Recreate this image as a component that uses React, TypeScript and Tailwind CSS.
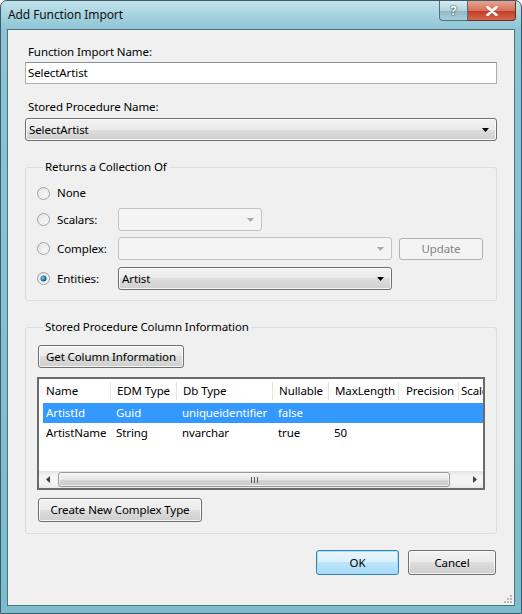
import React from "react";

const FONT = "font-['Noto_Sans','Open_Sans',sans-serif]";

const BTN =
  "border border-[#707070] rounded-[3px] bg-[linear-gradient(to_bottom,#f2f2f2_0%,#ebebeb_50%,#dddddd_50%,#cfcfcf_100%)] shadow-[inset_0_0_0_1px_rgba(255,255,255,0.8)] text-black flex items-center justify-center";

function Arrow({ disabled }: { disabled?: boolean }) {
  return (
    <svg width="7" height="4" viewBox="0 0 7 4" className="shrink-0">
      <path d="M0 0h7L3.5 4z" fill={disabled ? "#a8a8a8" : "#000"} />
    </svg>
  );
}

function Combo({
  value,
  width,
  disabled,
}: {
  value?: string;
  width: string;
  disabled?: boolean;
}) {
  return (
    <div
      className={`${width} h-[23px] flex items-center pl-[3px] pr-[7px] rounded-[3px] border ${
        disabled
          ? "border-[#c3c3c3] bg-[#f4f4f4]"
          : "border-[#707070] bg-[linear-gradient(to_bottom,#f2f2f2_0%,#ebebeb_50%,#dddddd_50%,#cfcfcf_100%)] shadow-[inset_0_0_0_1px_rgba(255,255,255,0.8)]"
      }`}
    >
      <span className="flex-1 truncate">{value}</span>
      <Arrow disabled={disabled} />
    </div>
  );
}

function Radio({ checked }: { checked?: boolean }) {
  return (
    <svg width="13" height="13" viewBox="0 0 13 13" className="shrink-0">
      <defs>
        <linearGradient id="rb" x1="0" y1="0" x2="1" y2="1">
          <stop offset="0" stopColor="#e2e2e2" />
          <stop offset="1" stopColor="#ffffff" />
        </linearGradient>
        <radialGradient id="rd" cx="0.4" cy="0.4" r="0.7">
          <stop offset="0" stopColor="#8fd5f0" />
          <stop offset="0.6" stopColor="#1f6d9a" />
          <stop offset="1" stopColor="#0d3b5a" />
        </radialGradient>
      </defs>
      <circle cx="6.5" cy="6.5" r="6" fill="url(#rb)" stroke="#a0a1a1" />
      <circle cx="6.5" cy="6.5" r="4.2" fill="none" stroke="#ececec" />
      {checked && <circle cx="6.5" cy="6.5" r="3" fill="url(#rd)" />}
    </svg>
  );
}

const HEAD = [
  { label: "Name", w: "w-[71px]", pl: "pl-[7px]" },
  { label: "EDM Type", w: "w-[66px]", pl: "pl-[6px]" },
  { label: "Db Type", w: "w-[96px]", pl: "pl-[6px]" },
  { label: "Nullable", w: "w-[56px]", pl: "pl-[6px]" },
  { label: "MaxLength", w: "w-[70px]", pl: "pl-[6px]" },
  { label: "Precision", w: "w-[60px]", pl: "pl-[7px]" },
  { label: "Scale", w: "w-[60px]", pl: "pl-[2px]" },
];

const ROW_W = ["w-[67px]", "w-[66px]", "w-[96px]", "w-[56px]", "w-[70px]", "w-[60px]", "w-[60px]"];

const ROWS = [
  ["ArtistId", "Guid", "uniqueidentifier", "false", "", "", ""],
  ["ArtistName", "String", "nvarchar", "true", "50", "", ""],
];

function ColumnGrid() {
  return (
    <div className="mt-[9px] h-[113px] min-w-0 border-2 border-[#6b6b6b] bg-white flex flex-col overflow-hidden">
      <div className="h-[24px] flex items-center shrink-0">
        {HEAD.map((h, i) => (
          <div
            key={h.label}
            className={`${h.w} shrink-0 h-[18px] flex items-center whitespace-nowrap overflow-hidden ${h.pl} ${
              i > 0 ? "border-l border-[#e3e5e7]" : ""
            }`}
          >
            {h.label}
          </div>
        ))}
      </div>
      {ROWS.map((r, ri) => (
        <div
          key={ri}
          className={`ml-[4px] h-[20px] flex items-center shrink-0 ${
            ri === 0 ? "bg-[#3399ff] text-white" : "text-black"
          }`}
        >
          {r.map((c, ci) => (
            <div
              key={ci}
              className={`${ROW_W[ci]} shrink-0 whitespace-nowrap overflow-hidden ${
                ci === 0 ? "pl-[3px]" : ci === 5 ? "pl-[7px]" : "pl-[6px]"
              }`}
            >
              {c}
            </div>
          ))}
        </div>
      ))}
      <div className="flex-1" />
      <div className="h-[17px] shrink-0 flex items-center bg-[linear-gradient(to_bottom,#e4e4e4,#f4f4f4_30%,#f4f4f4_70%,#e8e8e8)]">
        <div className="w-[17px] h-full flex items-center justify-center">
          <svg width="4" height="7" viewBox="0 0 4 7">
            <path d="M4 0v7L0 3.5z" fill="#404040" />
          </svg>
        </div>
        <div className="ml-[2px] w-[392px] h-[15px] rounded-[3px] border border-[#979797] bg-[linear-gradient(to_bottom,#f3f3f3_0%,#e8e8e8_50%,#d6d6d6_51%,#c9c9c9_100%)] shadow-[inset_0_0_0_1px_rgba(255,255,255,0.7)] flex items-center justify-center">
          <svg width="7" height="6" viewBox="0 0 7 6">
            <path d="M0.5 0v6M3.5 0v6M6.5 0v6" stroke="#5a5a5a" strokeWidth="1" />
          </svg>
        </div>
        <div className="flex-1" />
        <div className="w-[17px] h-full flex items-center justify-center">
          <svg width="4" height="7" viewBox="0 0 4 7">
            <path d="M0 0v7L4 3.5z" fill="#404040" />
          </svg>
        </div>
      </div>
    </div>
  );
}

export default function App() {
  return (
    <div className={`${FONT} text-[11.5px] tracking-[-0.1px] leading-[16px] w-[522px] h-[614px] bg-white`}>
      <div className="w-[522px] h-[614px] rounded-t-[7px] border border-[#3d5a66] bg-[linear-gradient(to_bottom,#c3e3ec_0px,#a6d3e0_14px,#8cc4d4_29px,#7cbccd_100%)] flex flex-col overflow-hidden">
        <div className="h-[28px] flex items-start shrink-0">
          <div className="pl-[7px] pt-[6px] text-[12px] text-[#111]">Add Function Import</div>
          <div className="ml-auto mr-[5px] flex">
            <div className="w-[29px] h-[20px] rounded-bl-[4px] border border-t-0 border-[#4d6f7c] bg-[linear-gradient(to_bottom,#d9ecf2,#b3d3dd_50%,#8fb8c6_51%,#a9d0dc)] flex items-center justify-center">
              <span className="text-white font-bold text-[13px] leading-none [text-shadow:0_0_1px_#1f3a44,0_0_2px_#1f3a44]">?</span>
            </div>
            <div className="w-[48px] h-[20px] rounded-br-[4px] border border-t-0 border-l-0 border-[#6b2b22] bg-[linear-gradient(to_bottom,#e8a493,#d5705a_50%,#c0391f_51%,#d56a4e)] flex items-center justify-center">
              <svg width="12" height="10" viewBox="0 0 12 10">
                <path d="M1.5 1l9 8M10.5 1l-9 8" stroke="#fff" strokeWidth="2.6" strokeLinecap="round" />
              </svg>
            </div>
          </div>
        </div>

        <div className="mx-[6px] h-[577px] border border-[#52727e] bg-[#f0f0f0] flex flex-col px-[17px] pt-[14px] text-black">
          <div className="ml-[3px]">Function Import Name:</div>
          <div className="mt-[2px] h-[22px] border border-[#abadb3] border-t-[#8e9198] bg-white flex items-center pl-[2px]">
            SelectArtist
          </div>

          <div className="ml-[3px] mt-[15px]">Stored Procedure Name:</div>
          <div className="mt-[3px]">
            <Combo value="SelectArtist" width="w-full" />
          </div>

          <fieldset className="mt-[18px] min-w-0 border border-[#d5dfe5] rounded-[3px] pl-[11px] pt-[7px] pb-[10px]">
            <legend className="ml-[6px] px-[2px]">Returns a Collection Of</legend>
            <div className="h-[22px] flex items-center">
              <div className="w-[81px] flex items-center gap-[7px]">
                <Radio />
                <span>None</span>
              </div>
            </div>
            <div className="mt-[4px] h-[23px] flex items-center">
              <div className="w-[81px] flex items-center gap-[7px]">
                <Radio />
                <span>Scalars:</span>
              </div>
              <Combo width="w-[144px]" disabled />
            </div>
            <div className="mt-[6px] h-[23px] flex items-center">
              <div className="w-[81px] flex items-center gap-[7px]">
                <Radio />
                <span>Complex:</span>
              </div>
              <Combo width="w-[274px]" disabled />
              <div className="ml-[7px] w-[84px] h-[22px] border border-[#adb2b5] rounded-[3px] bg-[#f4f4f4] text-[#838383] flex items-center justify-center">
                Update
              </div>
            </div>
            <div className="mt-[7px] h-[23px] flex items-center">
              <div className="w-[81px] flex items-center gap-[7px]">
                <Radio checked />
                <span>Entities:</span>
              </div>
              <Combo value="Artist" width="w-[274px]" />
            </div>
          </fieldset>

          <fieldset className="mt-[18px] min-w-0 border border-[#d5dfe5] rounded-[3px] pl-[11px] pr-[11px] pt-[10px] pb-[11px]">
            <legend className="ml-[6px] px-[2px]">Stored Procedure Column Information</legend>
            <div className={`${BTN} ml-[1px] w-[146px] h-[23px]`}>Get Column Information</div>
            <ColumnGrid />
            <div className={`${BTN} mt-[8px] ml-[1px] w-[164px] h-[24px]`}>Create New Complex Type</div>
          </fieldset>

          <div className="mt-[16px] flex justify-end gap-[9px] mr-[1px]">
            <div className="w-[83px] h-[25px] rounded-[3px] border border-[#3c7fb1] bg-[linear-gradient(to_bottom,#eaf6fd_0%,#d9f0fc_50%,#bee6fd_50%,#a7d9f5_100%)] shadow-[inset_0_0_0_1px_#9fe4f7] flex items-center justify-center">
              OK
            </div>
            <div className={`${BTN} w-[88px] h-[25px]`}>Cancel</div>
          </div>

          <div className="mt-auto -mr-[16px] mb-[1px] flex justify-end">
            <svg width="10" height="10" viewBox="0 0 10 10">
              <g fill="#b8b8b8">
                <rect x="7" y="1" width="2" height="2" />
                <rect x="4" y="4" width="2" height="2" />
                <rect x="7" y="4" width="2" height="2" />
                <rect x="1" y="7" width="2" height="2" />
                <rect x="4" y="7" width="2" height="2" />
                <rect x="7" y="7" width="2" height="2" />
              </g>
            </svg>
          </div>
        </div>
      </div>
    </div>
  );
}
